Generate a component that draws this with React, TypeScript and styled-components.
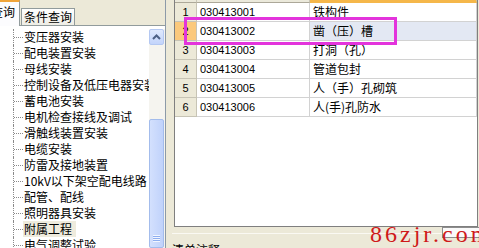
import React from 'react';
import styled, { createGlobalStyle } from 'styled-components';

const GlobalStyle = createGlobalStyle`
	html, body {
		margin: 0;
		padding: 0;
		background: #ece9d8;
	}
	body {
		font-family: "Noto Sans CJK SC", "Liberation Sans", sans-serif;
		font-size: 12px;
		color: #000;
	}
`;

const CJK = `"Noto Sans CJK SC", "Liberation Sans", sans-serif`;

const Screen = styled.div`
	position: relative;
	display: flex;
	width: 479px;
	height: 248px;
	overflow: hidden;
	background: #ece9d8;
`;

const LeftPanel = styled.div`
	display: flex;
	flex-direction: column;
	width: 166px;
	flex-shrink: 0;
	box-sizing: border-box;
	border-right: 1px solid #8c9aa8;
`;

const TabStrip = styled.div`
	display: flex;
	align-items: flex-end;
	height: 26px;
	flex-shrink: 0;
	box-sizing: border-box;
	border-bottom: 1px solid #919b9c;
`;

// the active tab is scrolled partly out of view, so only its end shows
const Tab = styled.div<{ $active?: boolean }>`
	box-sizing: border-box;
	display: flex;
	flex-shrink: 0;
	white-space: nowrap;
	overflow: hidden;
	font-family: ${CJK};
	font-size: 12px;
	line-height: 16px;
	border: 1px solid #919b9c;
	border-bottom: none;
	${(p) =>
		p.$active
			? `
		justify-content: flex-end;
		width: 20px;
		height: 26px;
		margin-bottom: -1px;
		padding: 2px 4px 0 0;
		border-left: none;
		background: #fcfcfe;
		border-top: 2px solid #f0a53a;
	`
			: `
		height: 17px;
		margin-left: 1px;
		padding: 0 2px;
		background: linear-gradient(#ffffff, #eeede5);
	`}
`;

const TreeBox = styled.div`
	flex: 1;
	display: flex;
	min-height: 0;
	padding-top: 3px;
	background: #fff;
	overflow: hidden;
`;

const TreeList = styled.div`
	flex: 1;
	min-width: 0;
	overflow: hidden;
	padding-left: 13px;
`;

const TreeRow = styled.div`
	display: flex;
	align-items: center;
	height: 16px;
	white-space: nowrap;
`;

const Connector = styled.span`
	display: flex;
	align-items: center;
	align-self: stretch;
	flex-shrink: 0;
	width: 9px;
	border-left: 1px dotted #8a8a8a;
	&::after {
		content: '';
		width: 100%;
		border-top: 1px dotted #8a8a8a;
	}
`;

const Label = styled.span<{ $selected?: boolean }>`
	font-family: ${CJK};
	font-size: 12px;
	line-height: 16px;
	padding: 0 4px 0 1px;
	background: ${(p) => (p.$selected ? '#eeebdd' : 'transparent')};
`;

const Scrollbar = styled.div`
	display: flex;
	flex-direction: column;
	width: 16px;
	flex-shrink: 0;
	background: #f5f4ef;
`;

const ScrollButton = styled.div`
	display: flex;
	align-items: center;
	justify-content: center;
	height: 16px;
	margin: 0 1px 0 0;
	box-sizing: border-box;
	border: 1px solid #b4c8f2;
	border-radius: 2px;
	background: linear-gradient(#dfe9fd, #c3d4fb);
`;

const Track = styled.div`
	height: 74px;
	flex-shrink: 0;
`;

const Thumb = styled.div`
	flex: 1;
	display: flex;
	flex-direction: column;
	justify-content: flex-end;
	align-items: center;
	padding-bottom: 5px;
	margin-right: 1px;
	border: 1px solid #a3bcec;
	border-radius: 2px;
	background: linear-gradient(90deg, #d3e0fd, #c0d2fb);
`;

const Grip = styled.div`
	width: 7px;
	height: 7px;
	background: repeating-linear-gradient(#f2f6ff 0 1px, #8eaef0 1px 2px);
`;

const Splitter = styled.div`
	width: 4px;
	flex-shrink: 0;
`;

const RightPanel = styled.div`
	flex: 1;
	min-width: 0;
	display: flex;
	flex-direction: column;
	padding-right: 1px;
`;

const GridBox = styled.div`
	height: 227px;
	flex-shrink: 0;
	margin-left: 4px;
	box-sizing: border-box;
	border: 1px solid #7f7f7f;
	border-top: none;
	background: #fff;
	overflow: hidden;
`;

const GridRow = styled.div<{ $header?: boolean }>`
	display: grid;
	grid-template-columns: 22px 113px 1fr;
	height: ${(p) => (p.$header ? '20px' : '19px')};
	margin-top: ${(p) => (p.$header ? '-17px' : '0')};
`;

const HeadCell = styled.div<{ $hot?: boolean }>`
	box-sizing: border-box;
	background: #ebe9db;
	border-right: 1px solid #c7c4b5;
	border-bottom: ${(p) => (p.$hot ? '3px solid #f5b74a' : '1px solid #aca899')};
`;

const RowHead = styled.div<{ $selected?: boolean }>`
	box-sizing: border-box;
	text-align: center;
	font-family: "Liberation Sans", sans-serif;
	font-size: 11px;
	line-height: 18px;
	background: ${(p) => (p.$selected ? '#fbc97c' : '#ece9d8')};
	border-right: 1px solid #c7c4b5;
	border-bottom: 1px solid #c7c4b5;
`;

const Cell = styled.div<{ $tint?: string; $cjk?: boolean }>`
	box-sizing: border-box;
	padding-left: 3px;
	white-space: nowrap;
	overflow: hidden;
	font-family: ${(p) => (p.$cjk ? CJK : `"Liberation Sans", sans-serif`)};
	font-size: ${(p) => (p.$cjk ? '12px' : '11px')};
	line-height: 18px;
	background: ${(p) => p.$tint || '#fff'};
	border-right: 1px solid #d2d2d2;
	border-bottom: 1px solid #d2d2d2;
`;

const BottomArea = styled.div`
	flex: 1;
	padding-left: 2px;
`;

const Separator = styled.div`
	height: 1px;
	margin-top: 6px;
	background: #faf9f3;
`;

const NoteLabel = styled.div`
	margin-top: 8px;
	font-family: ${CJK};
	font-size: 12px;
	line-height: 16px;
	white-space: nowrap;
`;

const Highlight = styled.div`
	position: absolute;
	left: 184px;
	top: 17px;
	width: 213px;
	height: 28px;
	box-sizing: border-box;
	border: 3px solid #e334dc;
	pointer-events: none;
`;

const MiniBox = styled.div`
	position: absolute;
	left: 442px;
	top: 227px;
	width: 40px;
	height: 11px;
	box-sizing: border-box;
	border: 1px solid #8d8d8d;
	background: #fafafa;
`;

const Watermark = styled.div`
	position: absolute;
	left: 370px;
	top: 222px;
	font-family: "Liberation Serif", serif;
	font-size: 24px;
	line-height: 24px;
	letter-spacing: 3px;
	color: #cf1a1a;
	white-space: nowrap;
`;

const treeItems = [
	'变压器安装',
	'配电装置安装',
	'母线安装',
	'控制设备及低压电器安装',
	'蓄电池安装',
	'电机检查接线及调试',
	'滑触线装置安装',
	'电缆安装',
	'防雷及接地装置',
	'10kV以下架空配电线路',
	'配管、配线',
	'照明器具安装',
	'附属工程',
	'电气调整试验',
];

const rows = [
	{ code: '030413001', name: '铁构件' },
	{ code: '030413002', name: '凿（压）槽' },
	{ code: '030413003', name: '打洞（孔）' },
	{ code: '030413004', name: '管道包封' },
	{ code: '030413005', name: '人（手）孔砌筑' },
	{ code: '030413006', name: '人(手)孔防水' },
];

const SELECTED_ROW = 1;

export default function App() {
	return (
		<>
			<GlobalStyle />
			<Screen>
				<LeftPanel>
					<TabStrip>
						<Tab $active>
							<span>清单查询</span>
						</Tab>
						<Tab>条件查询</Tab>
					</TabStrip>
					<TreeBox>
						<TreeList>
							{treeItems.map((item) => (
								<TreeRow key={item}>
									<Connector />
									<Label $selected={item === '附属工程'}>{item}</Label>
								</TreeRow>
							))}
						</TreeList>
						<Scrollbar>
							<ScrollButton>
								<svg width='9' height='6' viewBox='0 0 9 6'>
									<polyline
										points='1,5 4.5,1.5 8,5'
										fill='none'
										stroke='#4d6185'
										strokeWidth='2'
									/>
								</svg>
							</ScrollButton>
							<Track />
							<Thumb>
								<Grip />
							</Thumb>
						</Scrollbar>
					</TreeBox>
				</LeftPanel>
				<Splitter />
				<RightPanel>
					<GridBox>
						<GridRow $header>
							<HeadCell />
							<HeadCell />
							<HeadCell $hot />
						</GridRow>
						{rows.map((row, i) => (
							<GridRow key={row.code}>
								<RowHead $selected={i === SELECTED_ROW}>{i + 1}</RowHead>
								<Cell>{row.code}</Cell>
								<Cell $cjk $tint={i === SELECTED_ROW ? '#e3e8f3' : undefined}>
									{row.name}
								</Cell>
							</GridRow>
						))}
					</GridBox>
					<BottomArea>
						<Separator />
						<NoteLabel>清单注释</NoteLabel>
					</BottomArea>
				</RightPanel>
				<Highlight />
				<MiniBox />
				<Watermark>86zjr.com</Watermark>
			</Screen>
		</>
	);
}
